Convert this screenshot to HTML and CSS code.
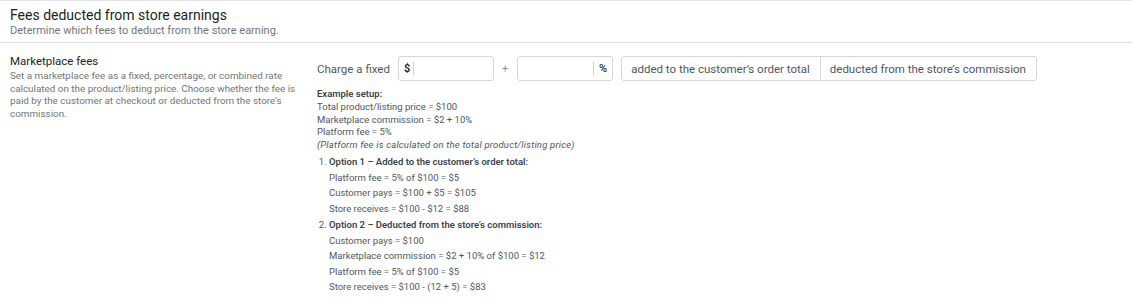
FILE: index.html
```html
<!DOCTYPE html>
<html>
<head>
<meta charset="utf-8">
<link rel="stylesheet" href="styles.css">
</head>
<body>
<div class="page">
  <header class="head">
    <h1 class="title">Fees deducted from store earnings</h1>
    <p class="subtitle">Determine which fees to deduct from the store earning.</p>
  </header>
  <section class="row">
    <div class="label-col">
      <h2 class="label">Marketplace fees</h2>
      <p class="desc">Set a marketplace fee as a fixed, percentage, or combined rate calculated on the product/listing price. Choose whether the fee is paid by the customer at checkout or deducted from the store’s commission.</p>
    </div>
    <div class="field-col">
      <div class="controls">
        <span class="lead">Charge a fixed</span>
        <div class="input input-left"><span class="affix">$</span><span class="bar"></span><span class="val"></span></div>
        <span class="plus">+</span>
        <div class="input input-right"><span class="val"></span><span class="bar"></span><span class="affix">%</span></div>
        <div class="toggle">
          <span class="opt">added to the customer’s order total</span>
          <span class="opt">deducted from the store’s commission</span>
        </div>
      </div>
      <div class="example">
        <div class="ex-head">Example setup:</div>
        <div>Total product/listing price = $100</div>
        <div>Marketplace commission = $2 + 10%</div>
        <div>Platform fee = 5%</div>
        <div class="note">(Platform fee is calculated on the total product/listing price)</div>
        <ol class="opts">
          <li><span class="opt-title">Option 1 – Added to the customer’s order total:</span>
            <ul class="calc">
              <li>Platform fee = 5% of $100 = $5</li>
              <li>Customer pays = $100 + $5 = $105</li>
              <li>Store receives = $100 - $12 = $88</li>
            </ul>
          </li>
          <li><span class="opt-title">Option 2 – Deducted from the store’s commission:</span>
            <ul class="calc">
              <li>Customer pays = $100</li>
              <li>Marketplace commission = $2 + 10% of $100 = $12</li>
              <li>Platform fee = 5% of $100 = $5</li>
              <li>Store receives = $100 - (12 + 5) = $83</li>
            </ul>
          </li>
        </ol>
      </div>
    </div>
  </section>
</div>
</body>
</html>
```
FILE: styles.css
```css
* { box-sizing: border-box; }
html, body { margin: 0; padding: 0; background: #fff; }
body {
  font-family: Roboto, "Noto Sans", sans-serif;
  color: #1e1e1e;
}
.page {
  border-top: 1px solid #e4e4e4;
}
.head {
  padding: 5px 10px 5px;
  border-bottom: 1px solid #dcdcdc;
  height: 42px;
}
.title {
  margin: 0;
  font-size: 14px;
  font-weight: 400;
  line-height: 18px;
  color: #1e1e1e;
}
.subtitle {
  margin: 0;
  font-size: 11px;
  line-height: 14px;
  color: #757575;
}
.row {
  display: flex;
  padding: 11px 10px 0;
}
.label-col {
  width: 297px;
  flex: none;
}
.label {
  margin: 0 0 2px;
  font-size: 11.5px;
  font-weight: 400;
  line-height: 14px;
  color: #1e1e1e;
}
.desc {
  margin: 0;
  font-size: 9.9px;
  line-height: 12.5px;
  color: #757575;
  width: 292px;
}
.field-col {
  padding-left: 10px;
}
.controls {
  display: flex;
  align-items: center;
  margin-top: 2px;
  height: 25px;
}
.lead {
  font-size: 11.5px;
  color: #50575e;
  margin-right: 8px;
}
.input {
  display: flex;
  align-items: center;
  width: 96px;
  height: 25px;
  border: 1px solid #d6d6d6;
  border-radius: 3px;
  padding: 0 5px;
  font-size: 11px;
}
.input-left { gap: 3px; }
.input-right { justify-content: flex-end; gap: 5px; }
.affix { color: #2c3338; font-weight: 500; }
.input-left .affix { color: #1d2327; font-weight: 600; }
.bar { width: 1px; height: 13px; background: #cfcfcf; }
.plus { font-size: 11px; color: #8c8f94; margin: 0 9px 0 8px; }
.toggle {
  display: flex;
  margin-left: 8px;
  border: 1px solid #d6d6d6;
  border-radius: 3px;
  height: 25px;
}
.opt {
  display: flex;
  align-items: center;
  padding: 0 9px;
  font-size: 11.5px;
  color: #50575e;
  white-space: nowrap;
}
.opt:first-child { padding-right: 10px; }
.opt + .opt { border-left: 1px solid #d6d6d6; padding-right: 10px; }
.example {
  margin-top: 7px;
  font-size: 9.5px;
  line-height: 12.75px;
  color: #50575e;
}
.ex-head { font-weight: 600; color: #3c434a; }
.note { font-style: italic; letter-spacing: 0.2px; }
.opts {
  margin: 2px 0 0;
  padding-left: 12px;
}
.opts > li { line-height: 16px; }
.opt-title { font-weight: 600; color: #3c434a; }
.calc {
  list-style: none;
  margin: 0;
  padding-left: 0;
}
.calc li { line-height: 15.6px; }
```
